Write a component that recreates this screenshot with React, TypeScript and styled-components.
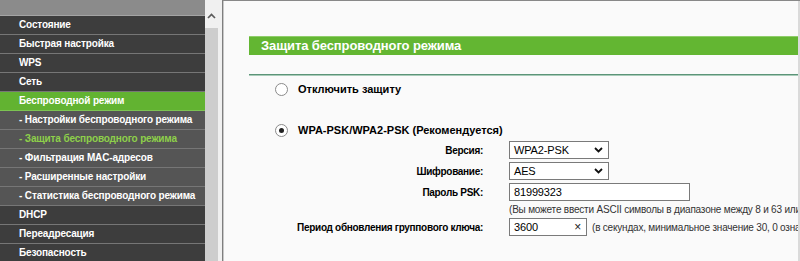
import React from 'react';
import styled, { createGlobalStyle } from 'styled-components';

const GlobalStyle = createGlobalStyle`
  html, body {
    margin: 0;
    padding: 0;
    background: #f0f0f0;
  }
  body {
    font-family: 'Liberation Sans', Arial, sans-serif;
  }
`;

const Page = styled.div`
  display: flex;
  width: 800px;
  height: 261px;
  overflow: hidden;
  background: #f0f0f0;
`;

const LeftFrame = styled.div`
  display: flex;
  width: 218px;
  flex-shrink: 0;
  height: 100%;
`;

const Menu = styled.ul`
  list-style: none;
  margin: 0;
  padding: 0;
  width: 205px;
  background: #3d3d3d;
  overflow: hidden;
`;

const MenuTop = styled.li`
  height: 15px;
  background: #8b8b8b;
  border-bottom: 1px solid #a4a4a4;
`;

const MenuItem = styled.li<{ $variant: 'main' | 'sub' | 'active'; $current?: boolean }>`
  height: 18px;
  line-height: 18px;
  padding-left: 19px;
  border-bottom: 1px solid ${(p) => (p.$variant === 'active' ? '#7cc352' : '#767676')};
  font-size: 10px;
  font-weight: bold;
  letter-spacing: -0.15px;
  white-space: nowrap;
  color: ${(p) => (p.$current ? '#8ed04a' : '#ffffff')};
  background: ${(p) =>
    p.$variant === 'active' ? '#62b331' : p.$variant === 'sub' ? '#555555' : '#3d3d3d'};
`;

const ScrollBar = styled.div`
  width: 13px;
  background: #cdcdcd;
  display: flex;
  flex-direction: column;
`;

const ScrollButton = styled.div`
  height: 28px;
  background: #f0f0f0;
  display: flex;
  justify-content: center;
  padding-top: 13px;
  box-sizing: border-box;
`;

const Gap = styled.div`
  width: 4px;
  flex-shrink: 0;
  background: #f0f0f0;
`;

const MainFrame = styled.div`
  flex: 1;
  display: flex;
  min-width: 0;
  border-left: 1px solid #7e7e7e;
  border-top: 1px solid #888888;
  background: #fafafa;
  box-shadow: inset 1px 0 0 #c8c8c8;
  overflow: hidden;
`;

const Content = styled.div`
  flex: 1;
  min-width: 0;
  padding: 35px 0 0 26px;
  overflow: hidden;
`;

const RightScroll = styled.div`
  width: 2px;
  flex-shrink: 0;
  background: #dadada;
`;

const Header = styled.div`
  height: 18px;
  line-height: 18px;
  background: #63b632;
  border-top: 1px solid #8fcd6a;
  color: #ffffff;
  font-size: 13px;
  font-weight: bold;
  letter-spacing: -0.1px;
  padding-left: 12px;
  white-space: nowrap;
`;

const Rule = styled.div`
  margin-top: 19px;
  height: 2px;
  background: linear-gradient(#5b9478 50%, #a9cbb9 50%);
`;

const RadioRow = styled.label<{ $top: number }>`
  display: flex;
  align-items: center;
  gap: 6px;
  height: 16px;
  margin-top: ${(p) => p.$top}px;
  padding-left: 26px;
  font-size: 11px;
  font-weight: bold;
  color: #000;
  white-space: nowrap;
`;

const Radio = styled.span<{ $checked?: boolean }>`
  position: relative;
  width: 11px;
  height: 11px;
  border-radius: 50%;
  border: 1px solid #8a8a8a;
  background: #ffffff;
  margin-right: 4px;
  flex-shrink: 0;
  &::after {
    content: '';
    display: ${(p) => (p.$checked ? 'block' : 'none')};
    position: absolute;
    left: 3px;
    top: 3px;
    width: 5px;
    height: 5px;
    border-radius: 50%;
    background: #222;
  }
`;

const Form = styled.div`
  display: grid;
  grid-template-columns: 234px auto;
  column-gap: 26px;
  row-gap: 3px;
  margin-top: 3px;
  align-items: center;
`;

const Label = styled.div`
  text-align: right;
  font-size: 10px;
  font-weight: bold;
  letter-spacing: -0.3px;
  color: #000;
  white-space: nowrap;
`;

const Field = styled.div`
  display: flex;
  align-items: center;
  gap: 5px;
  white-space: nowrap;
  min-width: 0;
`;

const Box = styled.div<{ $width: number }>`
  display: flex;
  align-items: center;
  justify-content: space-between;
  box-sizing: border-box;
  width: ${(p) => p.$width}px;
  height: 18px;
  border: 1px solid #7a7a7a;
  background: #ffffff;
  padding: 0 5px 0 4px;
  font-size: 11px;
  letter-spacing: -0.15px;
  color: #000;
  flex-shrink: 0;
`;

const Clear = styled.span`
  font-size: 12px;
  color: #222;
`;

const Hint = styled.div`
  font-size: 10px;
  letter-spacing: -0.2px;
  color: #333;
  white-space: nowrap;
`;

const Chevron = () => (
  <svg width="9" height="6" viewBox="0 0 9 6">
    <path d="M1 1 L4.5 4.5 L8 1" fill="none" stroke="#111" strokeWidth="1.8" />
  </svg>
);

const UpArrow = () => (
  <svg width="9" height="6" viewBox="0 0 9 6">
    <path d="M1 5 L4.5 1.5 L8 5" fill="none" stroke="#5a5a5a" strokeWidth="1.7" />
  </svg>
);

const menu: { text: string; variant: 'main' | 'sub' | 'active'; current?: boolean }[] = [
  { text: 'Состояние', variant: 'main' },
  { text: 'Быстрая настройка', variant: 'main' },
  { text: 'WPS', variant: 'main' },
  { text: 'Сеть', variant: 'main' },
  { text: 'Беспроводной режим', variant: 'active' },
  { text: '- Настройки беспроводного режима', variant: 'sub' },
  { text: '- Защита беспроводного режима', variant: 'sub', current: true },
  { text: '- Фильтрация MAC-адресов', variant: 'sub' },
  { text: '- Расширенные настройки', variant: 'sub' },
  { text: '- Статистика беспроводного режима', variant: 'sub' },
  { text: 'DHCP', variant: 'main' },
  { text: 'Переадресация', variant: 'main' },
  { text: 'Безопасность', variant: 'main' },
];

const App: React.FunctionComponent = () => {
  return (
    <>
      <GlobalStyle />
      <Page>
        <LeftFrame>
          <Menu>
            <MenuTop />
            {menu.map((m, i) => (
              <MenuItem key={i} $variant={m.variant} $current={m.current}>
                {m.text}
              </MenuItem>
            ))}
          </Menu>
          <ScrollBar>
            <ScrollButton>
              <UpArrow />
            </ScrollButton>
          </ScrollBar>
        </LeftFrame>
        <Gap />
        <MainFrame>
          <Content>
            <Header>Защита беспроводного режима</Header>
            <Rule />
            <RadioRow $top={5}>
              <Radio />
              Отключить защиту
            </RadioRow>
            <RadioRow $top={25}>
              <Radio $checked />
              WPA-PSK/WPA2-PSK (Рекомендуется)
            </RadioRow>
            <Form>
              <Label>Версия:</Label>
              <Field>
                <Box $width={100}>
                  WPA2-PSK
                  <Chevron />
                </Box>
              </Field>
              <Label>Шифрование:</Label>
              <Field>
                <Box $width={100}>
                  AES
                  <Chevron />
                </Box>
              </Field>
              <Label>Пароль PSK:</Label>
              <Field>
                <Box $width={181}>81999323</Box>
              </Field>
              <div />
              <Field>
                <Hint>(Вы можете ввести ASCII символы в диапазоне между 8 и 63 или</Hint>
              </Field>
              <Label>Период обновления группового ключа:</Label>
              <Field>
                <Box $width={78}>
                  3600
                  <Clear>×</Clear>
                </Box>
                <Hint>(в секундах, минимальное значение 30, 0 означает отключение обновления)</Hint>
              </Field>
            </Form>
          </Content>
          <RightScroll />
        </MainFrame>
      </Page>
    </>
  );
};

export default App;
